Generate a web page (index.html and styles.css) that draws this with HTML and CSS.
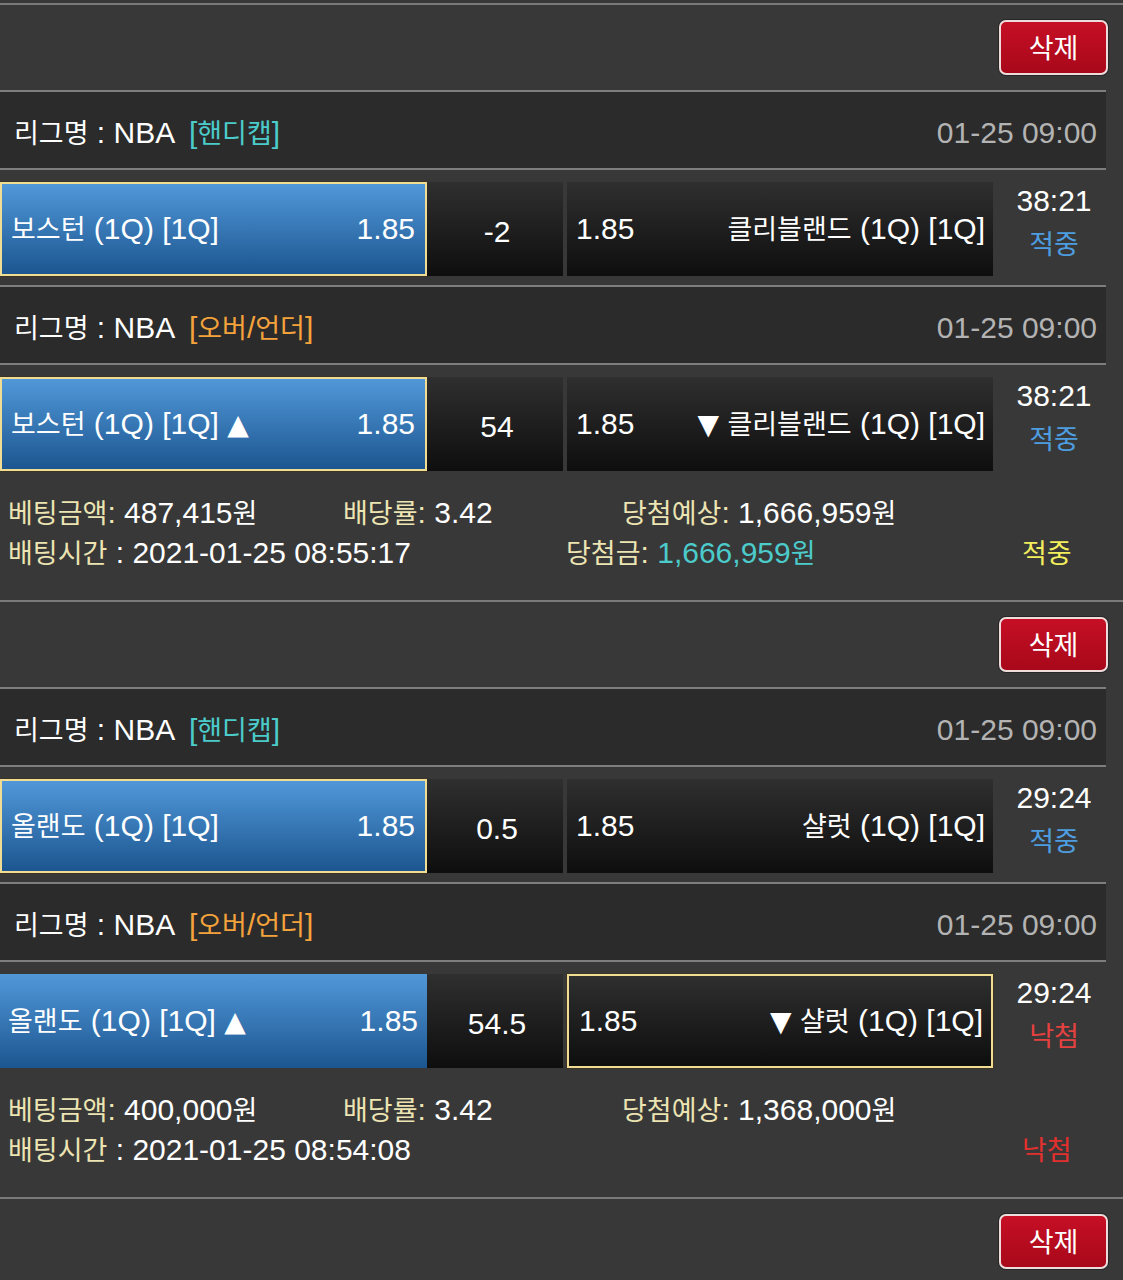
FILE: index.html
```html
<!DOCTYPE html>
<html lang="ko">
<head>
<meta charset="utf-8">
<title>배팅내역</title>
<link rel="stylesheet" href="styles.css">
</head>
<body>

<section class="bet">
  <div class="actions"><button class="del"><span class="k">삭제</span></button></div>

  <div class="game">
    <div class="league">
      <div class="lname"><span class="k">리그명</span> : NBA <span class="tag cyan">[<span class="k">핸디캡</span>]</span></div>
      <div class="date">01-25 09:00</div>
    </div>
    <div class="match">
      <div class="home sel"><span><span class="k">보스턴</span> (1Q) [1Q]</span><span>1.85</span></div>
      <div class="mid">-2</div>
      <div class="away"><span>1.85</span><span><span class="k">클리블랜드</span> (1Q) [1Q]</span></div>
      <div class="time"><span>38:21</span><span class="k st-blue">적중</span></div>
    </div>
  </div>

  <div class="game">
    <div class="league">
      <div class="lname"><span class="k">리그명</span> : NBA <span class="tag orange">[<span class="k">오버</span>/<span class="k">언더</span>]</span></div>
      <div class="date">01-25 09:00</div>
    </div>
    <div class="match">
      <div class="home sel"><span><span class="k">보스턴</span> (1Q) [1Q] <span class="tri">▲</span></span><span>1.85</span></div>
      <div class="mid">54</div>
      <div class="away"><span>1.85</span><span><span class="tri">▼</span> <span class="k">클리블랜드</span> (1Q) [1Q]</span></div>
      <div class="time"><span>38:21</span><span class="k st-blue">적중</span></div>
    </div>
  </div>

  <div class="info">
    <div class="row r1">
      <div class="c1"><span class="lbl"><span class="k">베팅금액</span>:</span> 487,415<span class="k">원</span></div>
      <div class="c2"><span class="lbl"><span class="k">배당률</span>:</span> 3.42</div>
      <div class="c3"><span class="lbl"><span class="k">당첨예상</span>:</span> 1,666,959<span class="k">원</span></div>
    </div>
    <div class="row r2">
      <div class="c1"><span class="lbl"><span class="k">배팅시간</span></span> : 2021-01-25 08:55:17</div>
      <div class="c2"><span class="lbl"><span class="k">당첨금</span>:</span> <span class="cyan">1,666,959<span class="k">원</span></span></div>
      <div class="c3"><span class="k res-win">적중</span></div>
    </div>
  </div>
</section>

<section class="bet">
  <div class="actions"><button class="del"><span class="k">삭제</span></button></div>

  <div class="game">
    <div class="league">
      <div class="lname"><span class="k">리그명</span> : NBA <span class="tag cyan">[<span class="k">핸디캡</span>]</span></div>
      <div class="date">01-25 09:00</div>
    </div>
    <div class="match">
      <div class="home sel"><span><span class="k">올랜도</span> (1Q) [1Q]</span><span>1.85</span></div>
      <div class="mid">0.5</div>
      <div class="away"><span>1.85</span><span><span class="k">샬럿</span> (1Q) [1Q]</span></div>
      <div class="time"><span>29:24</span><span class="k st-blue">적중</span></div>
    </div>
  </div>

  <div class="game">
    <div class="league">
      <div class="lname"><span class="k">리그명</span> : NBA <span class="tag orange">[<span class="k">오버</span>/<span class="k">언더</span>]</span></div>
      <div class="date">01-25 09:00</div>
    </div>
    <div class="match">
      <div class="home"><span><span class="k">올랜도</span> (1Q) [1Q] <span class="tri">▲</span></span><span>1.85</span></div>
      <div class="mid">54.5</div>
      <div class="away sel"><span>1.85</span><span><span class="tri">▼</span> <span class="k">샬럿</span> (1Q) [1Q]</span></div>
      <div class="time"><span>29:24</span><span class="k st-red">낙첨</span></div>
    </div>
  </div>

  <div class="info">
    <div class="row r1">
      <div class="c1"><span class="lbl"><span class="k">베팅금액</span>:</span> 400,000<span class="k">원</span></div>
      <div class="c2"><span class="lbl"><span class="k">배당률</span>:</span> 3.42</div>
      <div class="c3"><span class="lbl"><span class="k">당첨예상</span>:</span> 1,368,000<span class="k">원</span></div>
    </div>
    <div class="row r2">
      <div class="c1"><span class="lbl"><span class="k">배팅시간</span></span> : 2021-01-25 08:54:08</div>
      <div class="c2"></div>
      <div class="c3"><span class="k res-lose">낙첨</span></div>
    </div>
  </div>
</section>

<section class="bet">
  <div class="actions"><button class="del"><span class="k">삭제</span></button></div>
</section>

</body>
</html>
```

FILE: styles.css
```css
html, body {
  margin: 0;
  background: #383838;
}

body {
  padding-top: 3px;
  font-family: "Liberation Sans", "Noto Sans CJK KR", sans-serif;
  font-size: 30px;
  line-height: 1.2;
  color: #ffffff;
  overflow: hidden;
}

.k {
  font-family: "Noto Sans CJK KR", "Liberation Sans", sans-serif;
  font-size: 27px;
  line-height: 1;
}

.bet {
  border-top: 2px solid #7a7a7a;
}

.actions {
  height: 85px;
  box-sizing: border-box;
  padding: 15px 15px 0 0;
  display: flex;
  justify-content: flex-end;
  align-items: flex-start;
}

.del {
  width: 109px;
  height: 55px;
  box-sizing: border-box;
  border: 2px solid #eedcdc;
  border-radius: 7px;
  background: linear-gradient(#c60f25, #a8081a);
  box-shadow: 0 0 0 1px #262626;
  color: #ffffff;
  font: inherit;
  display: flex;
  align-items: center;
  justify-content: center;
  padding: 0 0 2px;
}

.league {
  width: 1106px;
  height: 80px;
  box-sizing: border-box;
  padding: 6px 9px 0 14px;
  background: #2b2b2b;
  border-top: 2px solid #7e7e7e;
  border-bottom: 2px solid #7e7e7e;
  display: flex;
  align-items: center;
  justify-content: space-between;
}

.lname {
  white-space: pre;
}

.tag {
  margin-left: 7px;
}

.cyan {
  color: #4ccbcb;
}

.orange {
  color: #f4a23c;
}

.date {
  color: #b3b3b3;
}

.match {
  height: 115px;
  box-sizing: border-box;
  padding: 12px 0 9px;
  display: flex;
}

.home,
.away,
.mid {
  box-sizing: border-box;
  display: flex;
  align-items: center;
  white-space: pre;
}

.home {
  flex: 0 0 427px;
  justify-content: space-between;
  padding: 0 9px 0 8px;
  background: linear-gradient(#5198d9, #1c5690);
}

.mid {
  flex: 0 0 136px;
  justify-content: center;
  padding: 5px 0 0 4px;
  background: linear-gradient(#2f2f2f, #0e0e0e);
}

.away {
  flex: 0 0 426px;
  margin-left: 4px;
  justify-content: space-between;
  padding: 0 8px 0 9px;
  background: linear-gradient(#2f2f2f, #0e0e0e);
}

.home.sel,
.away.sel {
  border: 2px solid #f1dc93;
  box-shadow: 0 0 0 1px #3a3326;
}

.home.sel {
  padding: 0 10px 0 9px;
}

.away.sel {
  padding: 0 8px 0 10px;
}

.tri {
  font-family: "DejaVu Sans", sans-serif;
  font-size: 28px;
}

.time {
  flex: 0 0 113px;
  display: flex;
  flex-direction: column;
  align-items: center;
  justify-content: center;
  line-height: 42px;
  padding: 0 0 14px 9px;
  box-sizing: border-box;
}

.time .k {
  line-height: 42px;
}

.st-blue {
  color: #4d9de0;
}

.st-red {
  color: #e5413f;
}

.info {
  height: 120px;
  box-sizing: border-box;
  padding: 13px 0 0 8px;
}

.row {
  display: flex;
  height: 40px;
  align-items: center;
  white-space: pre;
}

.r1 .c1 { width: 335px; }
.r1 .c2 { width: 279px; }
.r2 .c1 { width: 558px; }
.r2 .c2 { width: 456px; }

.c3 {
  flex: 1;
}

.lbl {
  color: #ece4b2;
}

.res-win {
  color: #f2ee5c;
}

.res-lose {
  color: #e2302e;
}
```
